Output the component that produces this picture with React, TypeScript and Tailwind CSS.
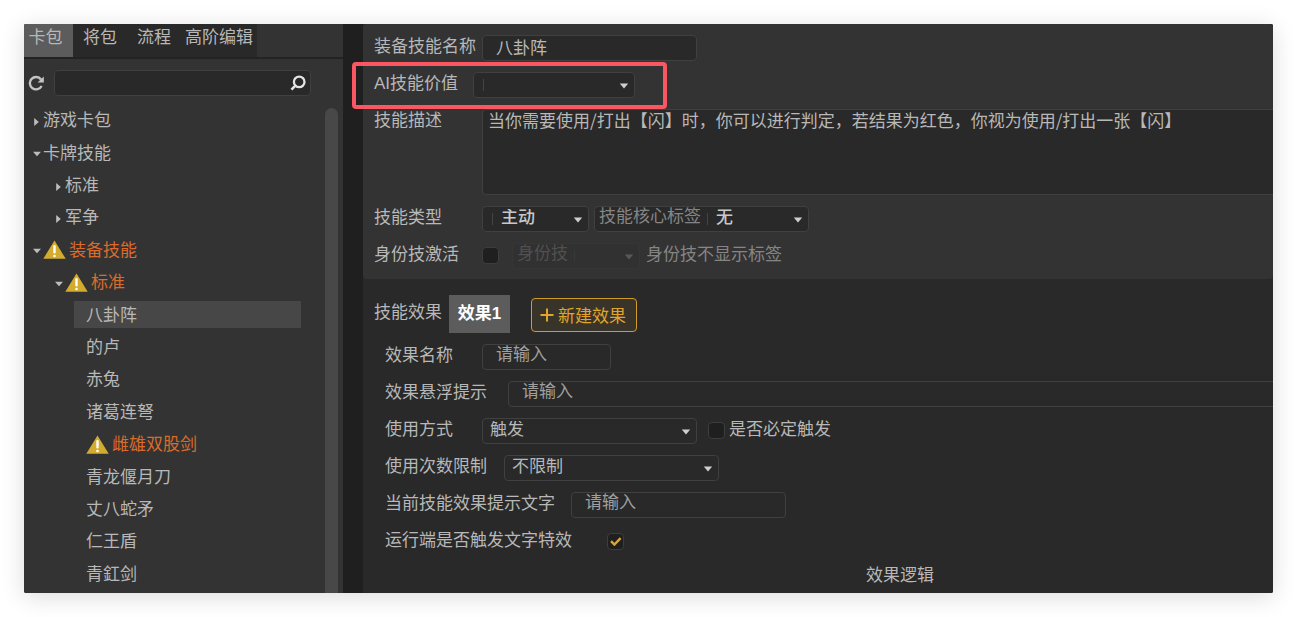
import type { ReactNode } from "react";

type TreeNode = {
  label: string;
  level: 0 | 1 | 2;
  open?: boolean;
  warn?: boolean;
  selected?: boolean;
};

const tree: TreeNode[] = [
  { label: "游戏卡包", level: 0, open: false },
  { label: "卡牌技能", level: 0, open: true },
  { label: "标准", level: 1, open: false },
  { label: "军争", level: 1, open: false },
  { label: "装备技能", level: 0, open: true, warn: true },
  { label: "标准", level: 1, open: true, warn: true },
  { label: "八卦阵", level: 2, selected: true },
  { label: "的卢", level: 2 },
  { label: "赤兔", level: 2 },
  { label: "诸葛连弩", level: 2 },
  { label: "雌雄双股剑", level: 2, warn: true },
  { label: "青龙偃月刀", level: 2 },
  { label: "丈八蛇矛", level: 2 },
  { label: "仁王盾", level: 2 },
  { label: "青釭剑", level: 2 },
];

const indents = ["pl-[9px]", "pl-[31px]", "pl-[50px]"];

function WarnIcon() {
  return (
    <svg className="mr-[3px] h-[19px] w-[23px] shrink-0" viewBox="0 0 23 19" aria-hidden="true">
      <path d="M11.5 0.5 22.7 18.8H0.3Z" fill="#d3ac2f" />
      <rect x="10.3" y="5" width="2.4" height="8.6" rx="1.1" fill="#fff" />
      <circle cx="11.5" cy="16" r="1.3" fill="#fff" />
    </svg>
  );
}

function Twisty({ open }: { open: boolean }) {
  return (
    <svg className="mt-[3px] h-[10px] w-[10px] shrink-0" viewBox="0 0 10 10" aria-hidden="true">
      <path d={open ? "M0 2.8H8L4 7.2Z" : "M1.2 1 5.8 5 1.2 9Z"} fill="#bdbdbd" />
    </svg>
  );
}

function Sidebar() {
  return (
    <aside className="flex w-[319px] shrink-0 flex-col bg-[#333]">
      <nav className="flex h-[35px] shrink-0 border-b-2 border-[#232323] leading-[28px]">
        <button className="w-[49px] bg-[#5c5c5c] pb-[5px] pr-[6px] text-center">卡包</button>
        <div className="flex bg-[#292929] pr-[4px]">
          <button className="px-[10px] pb-[5px]">将包</button>
          <button className="px-[10px] pb-[5px]">流程</button>
          <button className="pb-[5px] pl-[4px]">高阶编辑</button>
        </div>
      </nav>
      <div className="flex items-center pl-1 pr-8 pt-[11px]">
        <button aria-label="刷新" className="mr-[10px]">
          <svg className="h-4 w-4" viewBox="0 0 16 16" aria-hidden="true">
            <path d="M13 4.4A6.2 6.2 0 1 0 13.6 11" fill="none" stroke="#c4c4c4" strokeWidth="2.4" />
            <path d="M15.8 1.6V7.6H9.6Z" fill="#c4c4c4" />
          </svg>
        </button>
        <div className="flex h-[26px] min-w-0 flex-1 items-center rounded border border-[#404040] bg-[#292929] pr-1">
          <input aria-label="搜索" className="min-w-0 flex-1 bg-transparent px-2 outline-none" />
          <svg className="h-4 w-4 shrink-0" viewBox="0 0 16 16" aria-hidden="true">
            <circle cx="9.2" cy="6.9" r="5.3" fill="none" stroke="#e4e4e4" strokeWidth="2.3" />
            <path d="M5.4 10.6 1.4 14.6" stroke="#e4e4e4" strokeWidth="2.6" />
          </svg>
        </div>
      </div>
      <div className="flex min-h-0 flex-1 pr-[5px]">
        <ul className="flex flex-1 flex-col pb-[3px] pt-2">
          {tree.map((n, i) => (
            <li key={i} className={`flex flex-1 items-center pr-6 ${indents[n.level]}`}>
              <button
                className={`flex h-[27px] flex-1 items-center ${n.level === 2 ? "pl-3" : ""} ${
                  n.selected ? "bg-[#474747]" : ""
                } ${n.warn ? "text-[#dc6b2a]" : ""}`}
              >
                {n.open !== undefined && <Twisty open={n.open} />}
                {n.warn && <WarnIcon />}
                <span className="pt-[2px] leading-[24px]">{n.label}</span>
              </button>
            </li>
          ))}
        </ul>
        <div className="mt-3 w-[13px] rounded-t-full bg-[#484848]" />
      </div>
    </aside>
  );
}

function Row({ label, id, width, children }: { label: string; id?: string; width: string; children: ReactNode }) {
  return (
    <div className="flex h-full min-h-[26px]">
      <label htmlFor={id} className={`${width} h-6 shrink-0 whitespace-nowrap leading-[24px]`}>
        {label}
      </label>
      {children}
    </div>
  );
}

function TextInput({ id, width, value, placeholder }: { id: string; width: string; value?: string; placeholder?: string }) {
  return (
    <input
      id={id}
      defaultValue={value}
      placeholder={placeholder}
      className={`${width} h-[26px] rounded border border-[#404040] bg-[#292929] pb-[4px] pl-[13px] outline-none placeholder:text-[#a0a0a0]`}
    />
  );
}

function Select({
  id,
  width,
  value,
  prefix,
  bar,
  disabled,
}: {
  id: string;
  width: string;
  value: string;
  prefix?: string;
  bar?: boolean;
  disabled?: boolean;
}) {
  return (
    <div
      className={`${width} relative flex h-[26px] items-center rounded border ${
        disabled ? "border-[#363636] bg-[#313131] text-[#505050]" : "border-[#404040] bg-[#292929]"
      }`}
    >
      {prefix && (
        <label htmlFor={id} className={`pb-1 pl-1 leading-[20px] ${disabled ? "" : "text-[#858585]"}`}>
          {prefix}
        </label>
      )}
      {bar && <span className={`h-3 w-px ${prefix ? "ml-[6px]" : "ml-[9px]"} ${disabled ? "bg-[#383838]" : "bg-[#444]"}`} />}
      <select
        id={id}
        disabled={disabled}
        className={`h-[24px] min-w-0 flex-1 appearance-none bg-transparent pb-[3px] leading-[17px] outline-none ${
          bar ? "pl-2 font-medium text-[#c8c8c8]" : "pl-[7px]"
        }`}
      >
        <option>{value}</option>
      </select>
      <svg className="pointer-events-none absolute right-[5px] top-[10px] h-[6px] w-[10px]" viewBox="0 0 10 6" aria-hidden="true">
        <path d="M0.8 0.4H9.2L5 5.4Z" fill={disabled ? "#585858" : "#cfcfcf"} />
      </svg>
    </div>
  );
}

function Check({ id, checked }: { id: string; checked?: boolean }) {
  return (
    <span className="relative mt-1 h-[17px] w-[17px] shrink-0">
      <input
        id={id}
        type="checkbox"
        defaultChecked={checked}
        className="peer block h-[17px] w-[17px] appearance-none rounded border border-[#3d3d3d] bg-[#1f1f1f]"
      />
      <svg
        className="pointer-events-none absolute left-[3px] top-[4px] hidden h-[10px] w-[12px] peer-checked:block"
        viewBox="0 0 12 10"
        aria-hidden="true"
      >
        <path d="M1 4.2 4.4 7.6 10.6 1.2" fill="none" stroke="#e0a52a" strokeWidth="2.4" />
      </svg>
    </span>
  );
}

export default function App() {
  return (
    <div className="min-h-screen bg-white p-6 text-[17px] text-[#b8b8b8] [font-family:'Liberation_Sans','Noto_Sans_CJK_SC',sans-serif]">
      <div className="rounded-[2px] shadow-[0_4px_24px_rgba(0,0,0,0.14)]">
        <div className="flex min-h-[calc(100vh-48px)] overflow-hidden rounded-[2px] bg-[#1f1f1f]">
          <Sidebar />
          <main className="ml-5 flex min-w-0 flex-1 flex-col bg-[#292929]">
            <section className="relative rounded bg-[#333] pb-[10px] pt-[11px]">
              <div className="flex w-[118%] flex-col gap-[11px] pl-[11px]">
                <Row label="装备技能名称" id="name" width="w-[108px]">
                  <TextInput id="name" width="w-[215px]" value="八卦阵" />
                </Row>
                <Row label="AI技能价值" id="value" width="w-[99px]">
                  <Select id="value" width="w-[162px]" value="" bar />
                </Row>
                <Row label="技能描述" id="desc" width="w-[108px]">
                  <textarea
                    id="desc"
                    className="h-[86px] flex-1 resize-none rounded border border-[#404040] bg-[#292929] px-[5px] leading-[20px] outline-none [font-family:'Noto_Sans_CJK_SC',sans-serif]"
                    defaultValue="当你需要使用/打出【闪】时，你可以进行判定，若结果为红色，你视为使用/打出一张【闪】"
                  />
                </Row>
                <Row label="技能类型" id="type" width="w-[108px]">
                  <Select id="type" width="w-[107px]" value="主动" bar />
                  <div className="w-[5px]" />
                  <Select id="core" width="w-[215px]" value="无" prefix="技能核心标签" bar />
                </Row>
                <Row label="身份技激活" id="identity" width="w-[108px]">
                  <Check id="identity" />
                  <div className="w-[13px]" />
                  <Select id="identityType" width="w-[128px]" value="" prefix="身份技" bar disabled />
                  <span className="ml-[6px] leading-[24px] text-[#858585]">身份技不显示标签</span>
                </Row>
              </div>
              <div className="pointer-events-none absolute left-[-11px] top-[38px] h-[47px] w-[315px] rounded-[4px] border-4 border-[#fa5763]" />
            </section>
            <section className="pt-4">
              <div className="flex pl-[11px]">
                <span className="w-[75px] leading-[36px]">技能效果</span>
                <button className="h-[38px] w-[61px] bg-[#5c5c5c] font-bold text-white">效果1</button>
                <button className="ml-[21px] mt-[3px] flex h-[34px] w-[106px] items-center rounded border border-[#d29b28] bg-[#38342a] pl-2 text-[#e0a52a]">
                  <svg className="mr-1 h-[14px] w-[14px]" viewBox="0 0 14 14" aria-hidden="true">
                    <path d="M7 0.5V13.5M0.5 7H13.5" stroke="#e0a52a" strokeWidth="2" />
                  </svg>
                  <span className="whitespace-nowrap pt-[3px] leading-[24px]">新建效果</span>
                </button>
              </div>
              <div className="mt-[11px] flex w-[118%] flex-col gap-[11px] pl-[22px]">
                <Row label="效果名称" id="effectName" width="w-[97px]">
                  <TextInput id="effectName" width="w-[129px]" placeholder="请输入" />
                </Row>
                <Row label="效果悬浮提示" id="hover" width="w-[123px]">
                  <TextInput id="hover" width="flex-1" placeholder="请输入" />
                </Row>
                <Row label="使用方式" id="mode" width="w-[97px]">
                  <Select id="mode" width="w-[215px]" value="触发" />
                  <div className="w-[11px]" />
                  <Check id="must" />
                  <label htmlFor="must" className="ml-1 leading-[24px]">
                    是否必定触发
                  </label>
                </Row>
                <Row label="使用次数限制" id="limit" width="w-[119px]">
                  <Select id="limit" width="w-[215px]" value="不限制" />
                </Row>
                <Row label="当前技能效果提示文字" id="tip" width="w-[186px]">
                  <TextInput id="tip" width="w-[215px]" placeholder="请输入" />
                </Row>
                <Row label="运行端是否触发文字特效" id="fx" width="w-[222px]">
                  <Check id="fx" checked />
                </Row>
              </div>
              <h2 className="mt-[9px] w-[118%] text-center leading-[24px]">效果逻辑</h2>
            </section>
          </main>
        </div>
      </div>
    </div>
  );
}
